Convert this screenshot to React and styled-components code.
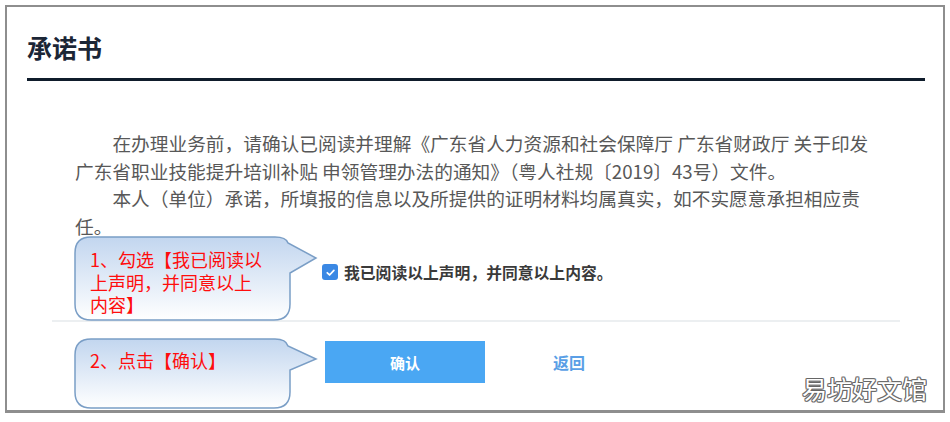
import React from "react";
import styled, { createGlobalStyle } from "styled-components";

const GlobalStyle = createGlobalStyle`
  html, body { margin: 0; padding: 0; background: #ffffff; }
  body { font-family: "Noto Sans CJK SC", "Noto Sans", sans-serif; }
  * { box-sizing: border-box; }
`;

const Page = styled.div`
  width: 950px;
  height: 422px;
  padding: 5px;
  background: #ffffff;
`;

const Frame = styled.div`
  position: relative;
  width: 940px;
  height: 408px;
  border: 2px solid #8e8e8e;
  border-bottom-width: 3px;
  background: #ffffff;
  padding: 24px 18px 0 20px;
  overflow: hidden;
`;

const Header = styled.div`
  padding-bottom: 15px;
  border-bottom: 3px solid #0f1c2b;
`;

const Title = styled.h1`
  margin: 0;
  font-size: 25px;
  line-height: 32px;
  font-weight: 700;
  color: #1b2636;
`;

const Notice = styled.div`
  margin: 48px 0 0 48px;
  width: 797px;
  font-size: 18.7px;
  line-height: 27.5px;
  color: #585858;
`;

const Para = styled.p`
  margin: 0;
  text-indent: 2em;
`;

const AgreeRow = styled.label`
  display: flex;
  align-items: center;
  gap: 6px;
  margin: 21px 0 0 295px;
  height: 24px;
  cursor: pointer;
`;

const CheckBox = styled.span`
  width: 16px;
  height: 16px;
  border-radius: 3px;
  background: #3a88e4;
  display: flex;
  align-items: center;
  justify-content: center;
`;

const AgreeText = styled.span`
  font-size: 15.8px;
  font-weight: 700;
  color: #3a3a3a;
`;

const Footer = styled.div`
  margin: 36px 0 0 25px;
  width: 848px;
  border-top: 2px solid #eceff1;
  padding: 19px 0 0 273px;
  display: flex;
  gap: 4px;
`;

const Button = styled.button`
  width: 160px;
  height: 42px;
  border: none;
  padding: 0;
  font-family: inherit;
  font-weight: 700;
  font-size: ${(p) => (p.$primary ? "15px" : "16px")};
  color: ${(p) => (p.$primary ? "#ffffff" : "#5a9fe6")};
  background: ${(p) => (p.$primary ? "#4aa7f3" : "transparent")};
  cursor: pointer;
`;

const Callout = styled.div`
  position: absolute;
  left: ${(p) => p.$left}px;
  top: ${(p) => p.$top}px;
  width: 245px;
  height: ${(p) => p.$height}px;
`;

const CalloutShape = styled.svg`
  position: absolute;
  left: 0;
  top: 0;
`;

const CalloutText = styled.div`
  position: relative;
  width: 192px;
  padding: ${(p) => p.$padTop}px 0 0 16px;
  font-size: 18px;
  line-height: 22.5px;
  color: #ff0d0d;
`;

const Watermark = styled.div`
  position: absolute;
  right: 16px;
  top: 366px;
  font-size: 25px;
  line-height: 30px;
  color: #ffffff;
  text-shadow: 1px 0 0 #666, -1px 0 0 #666, 0 1px 0 #666, 0 -1px 0 #666,
    1px 1px 0 #888, -1px -1px 0 #888, 1px -1px 0 #888, -1px 1px 0 #888;
`;

function Bubble({ left, top, height, path, padTop, id, children }) {
  return (
    <Callout $left={left} $top={top} $height={height}>
      <CalloutShape width="245" height={height} viewBox={`0 0 245 ${height}`}>
        <defs>
          <linearGradient id={id} x1="0" y1="0" x2="0" y2="1">
            <stop offset="0" stopColor="#c2d6ef" />
            <stop offset="1" stopColor="#ffffff" />
          </linearGradient>
        </defs>
        <path d={path} fill={`url(#${id})`} stroke="#7a9ec6" strokeWidth="1.5" />
      </CalloutShape>
      <CalloutText $padTop={padTop}>{children}</CalloutText>
    </Callout>
  );
}

export default function App() {
  return (
    <>
      <GlobalStyle />
      <Page>
        <Frame>
          <Header>
            <Title>承诺书</Title>
          </Header>
          <Notice>
            <Para>
              在办理业务前，请确认已阅读并理解《广东省人力资源和社会保障厅 广东省财政厅 关于印发广东省职业技能提升培训补贴 申领管理办法的通知》（粤人社规〔2019〕43号）文件。
            </Para>
            <Para>
              本人（单位）承诺，所填报的信息以及所提供的证明材料均属真实，如不实愿意承担相应责任。
            </Para>
          </Notice>
          <AgreeRow>
            <CheckBox>
              <svg width="11" height="11" viewBox="0 0 12 12">
                <polyline points="2.5,6.3 5,8.7 9.7,3.6" fill="none" stroke="#ffffff" strokeWidth="1.9" strokeLinecap="round" strokeLinejoin="round" />
              </svg>
            </CheckBox>
            <AgreeText>我已阅读以上声明，并同意以上内容。</AgreeText>
          </AgreeRow>
          <Footer>
            <Button $primary>确认</Button>
            <Button>返回</Button>
          </Footer>

          <Bubble
            id="g1"
            left={67}
            top={229}
            height={86}
            padTop={12}
            path="M17 1 H201 Q212 1 214 7 L242 22 L216 37 V68 Q216 84 200 84 H17 Q1 84 1 68 V17 Q1 1 17 1 Z"
          >
            1、勾选【我已阅读以上声明，并同意以上内容】
          </Bubble>
          <Bubble
            id="g2"
            left={67}
            top={331}
            height={72}
            padTop={11}
            path="M17 1 H201 Q212 1 214 8 L242 21 L216 32 V54 Q216 70 200 70 H17 Q1 70 1 54 V17 Q1 1 17 1 Z"
          >
            2、点击【确认】
          </Bubble>
          <Watermark>易坊好文馆</Watermark>
        </Frame>
      </Page>
    </>
  );
}
